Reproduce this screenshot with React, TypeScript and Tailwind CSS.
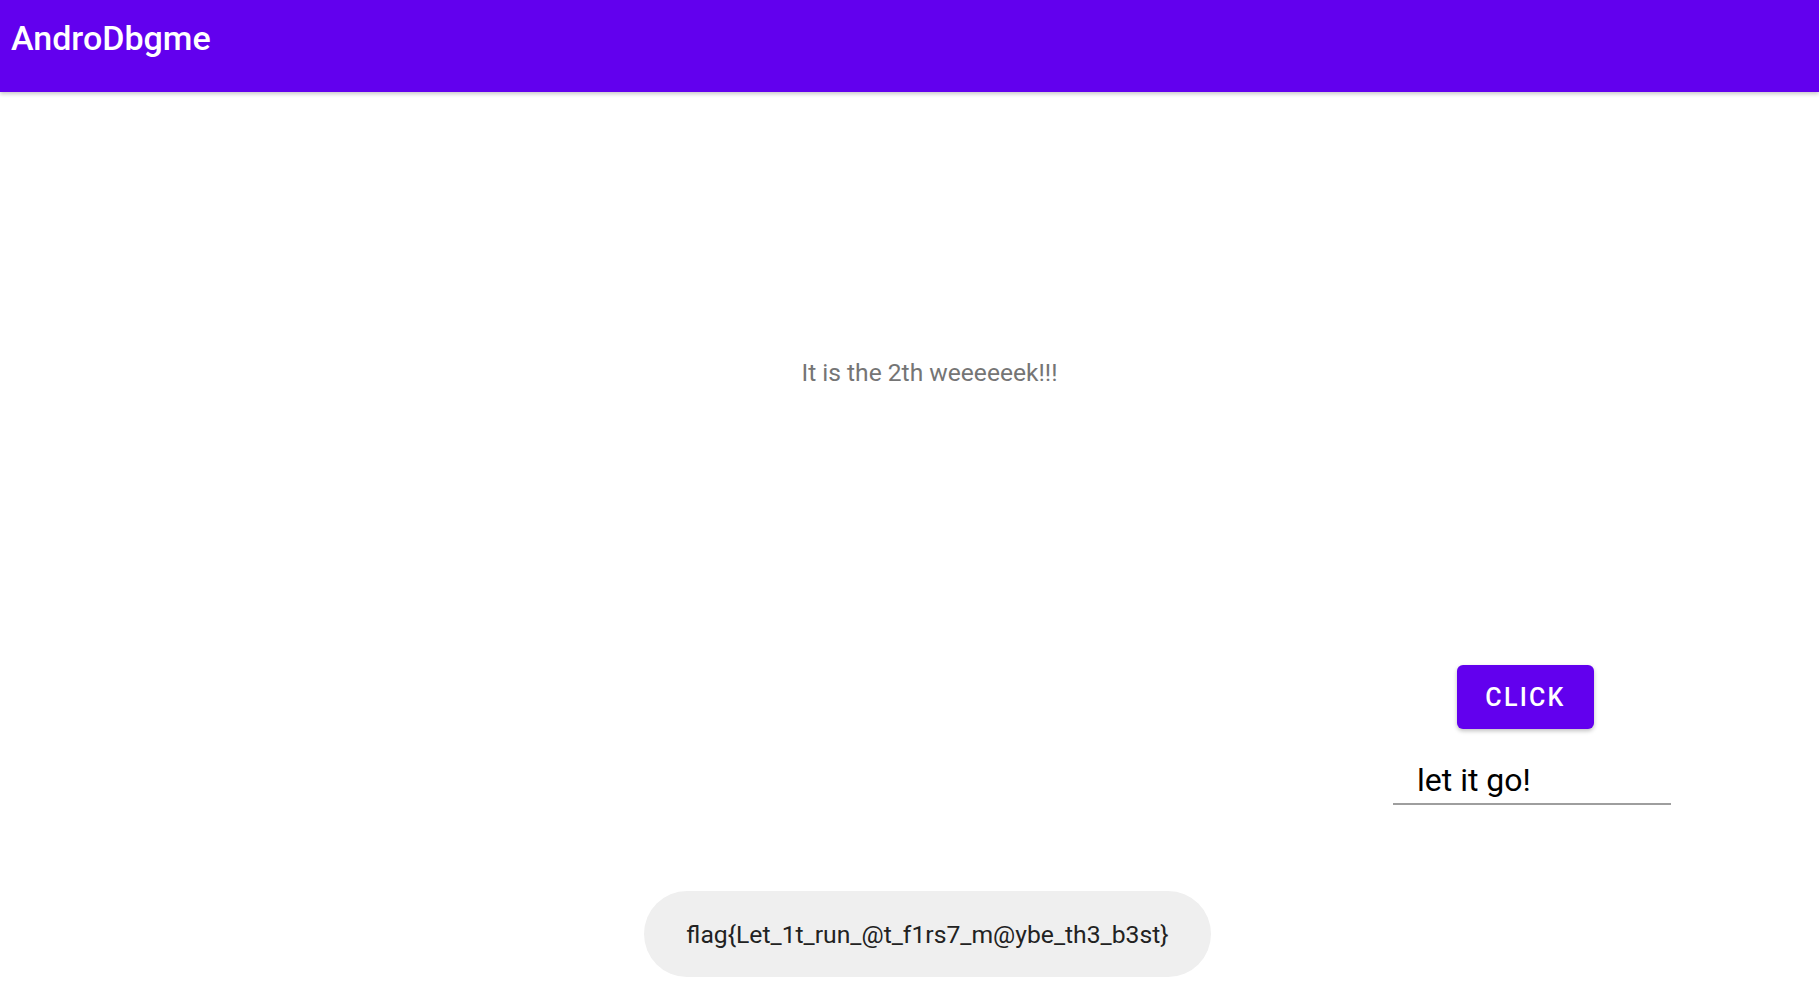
import React from "react";

export default function App() {
  return (
    <div className="relative w-[1819px] h-[997px] bg-white overflow-hidden" style={{ fontFamily: "Roboto, 'Noto Sans', sans-serif" }}>
      <header className="relative z-10 h-[92px] bg-[#6200ee] shadow-[0_2px_4px_rgba(0,0,0,0.22)] flex items-start">
        <h1 className="ml-[11px] mt-[18px] text-[34px] leading-[40px] font-medium text-white">AndroDbgme</h1>
      </header>
      <main className="flex flex-col">
        <div className="mt-[266px] flex justify-center pl-[40px]">
          <p className="text-[24.6px] leading-[30px] text-[#757575]">It is the 2th weeeeeek!!!</p>
        </div>
        <div className="mt-[277px] flex justify-end pr-[148px]">
          <div className="w-[278px] flex flex-col items-start">
            <button className="ml-[64px] w-[137px] h-[64px] rounded-[6px] bg-[#6200ee] text-white text-[25px] font-medium tracking-[0.09em] shadow-[0_2px_4px_rgba(0,0,0,0.25)] flex items-center justify-center pt-[2px]">
              CLICK
            </button>
            <div className="mt-[32px] w-full border-b-2 border-[#9e9e9e] pb-[4px]">
              <span className="block pl-[24px] text-[32px] leading-[38px] text-black">let it go!</span>
            </div>
          </div>
        </div>
      </main>
      <div className="absolute left-[644px] top-[891px] w-[567px] h-[86px] rounded-full bg-[#efefef] flex items-center justify-center">
        <span className="whitespace-nowrap text-[24.7px] leading-[30px] text-[#222222] pt-[2px]">flag{"{"}Let_1t_run_@t_f1rs7_m@ybe_th3_b3st{"}"}</span>
      </div>
    </div>
  );
}
